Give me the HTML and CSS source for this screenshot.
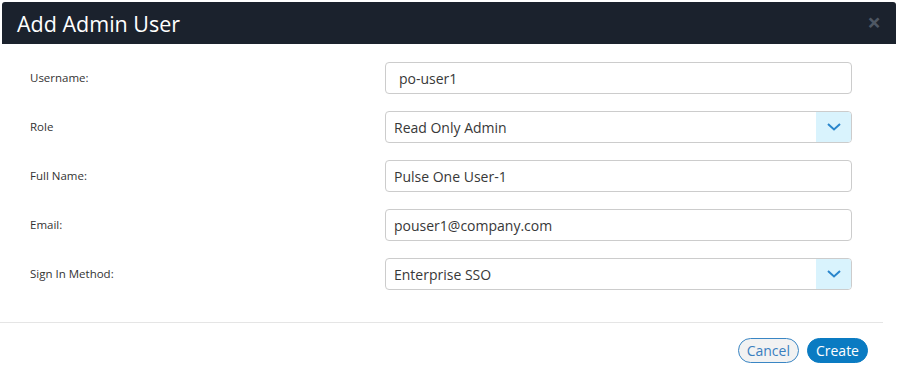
FILE: index.html
```html
<!DOCTYPE html>
<html lang="en">
<head>
    <meta charset="UTF-8">
    <title>Add Admin User</title>
    <link rel="stylesheet" href="styles.css">
</head>
<body>
    <div class="modal">
        <div class="modal-header">
            <h1>Add Admin User</h1>
            <span class="close">&times;</span>
        </div>
        <!-- form rows -->
        <div class="modal-body">
            <div class="row">
                <label>Username:</label>
                <div class="field field-wide">po-user1</div>
            </div>
            <div class="row">
                <label>Role</label>
                <div class="field select">
                    <span>Read Only Admin</span>
                    <span class="caret">
                        <svg width="16" height="10" viewBox="0 0 16 10"><path d="M2 2l6 5.5L14 2" fill="none" stroke="#2a86cc" stroke-width="2"/></svg>
                    </span>
                </div>
            </div>
            <div class="row">
                <label>Full Name:</label>
                <div class="field">Pulse One User-1</div>
            </div>
            <div class="row">
                <label>Email:</label>
                <div class="field">pouser1@company.com</div>
            </div>
            <div class="row">
                <label>Sign In Method:</label>
                <div class="field select">
                    <span>Enterprise SSO</span>
                    <span class="caret">
                        <svg width="16" height="10" viewBox="0 0 16 10"><path d="M2 2l6 5.5L14 2" fill="none" stroke="#2a86cc" stroke-width="2"/></svg>
                    </span>
                </div>
            </div>
        </div>
        <div class="modal-footer">
            <button class="btn btn-cancel">Cancel</button>
            <button class="btn btn-create">Create</button>
        </div>
    </div>
</body>
</html>
```

FILE: styles.css
```css
body {
    margin: 0;
    font-family: 'Open Sans', sans-serif;
    color: #333;
    background: #fff;
}

.modal {
    width: 898px;
    height: 378px;
}

.modal-header {
    margin: 2px 2px 0 2px;
    height: 42px;
    background: #1b222d;
    border-radius: 3px 3px 0 0;
    display: flex;
    align-items: center;
    justify-content: space-between;
    padding: 0 15px 0 15px;
}

.modal-header h1 {
    margin: 0;
    font-size: 21.5px;
    font-weight: 400;
    color: #fff;
}

.close {
    color: #4e5763;
    font-size: 24px;
    font-weight: 700;
    line-height: 1;
    margin-top: -3px;
}

.modal-body {
    padding: 18px 46px 0 30px;
    display: flex;
    flex-direction: column;
    gap: 17px;
}

.row {
    display: flex;
    align-items: center;
}

.row label {
    width: 355px;
    font-size: 11.5px;
    color: #333;
    margin-top: -2px;
}

.field {
    flex: 1;
    box-sizing: border-box;
    height: 32px;
    border: 1px solid #ccc;
    border-radius: 4px;
    display: flex;
    align-items: center;
    padding-left: 8px;
    font-size: 14px;
    color: #383838;
}

.field-wide {
    padding-left: 13px;
}

.select {
    justify-content: space-between;
    overflow: hidden;
}

.caret {
    width: 35px;
    height: 100%;
    background: #d9f3fd;
    display: flex;
    align-items: center;
    justify-content: center;
}

.modal-footer {
    margin-top: 32px;
    width: 883px;
    border-top: 1px solid #e5e5e5;
    display: flex;
    justify-content: flex-end;
    gap: 8px;
    padding-top: 15px;
    box-sizing: border-box;
    padding-right: 15px;
}

.btn {
    font-family: 'Open Sans', sans-serif;
    font-size: 14px;
    height: 25px;
    border-radius: 13px;
    padding: 0 8px;
    line-height: 1;
}

.btn-cancel {
    background: #f2f2f2;
    border: 1px solid #3a86c4;
    color: #3a7fbf;
}

.btn-create {
    background: #0a7bc2;
    border: 1px solid #0a7bc2;
    color: #fff;
}
```
